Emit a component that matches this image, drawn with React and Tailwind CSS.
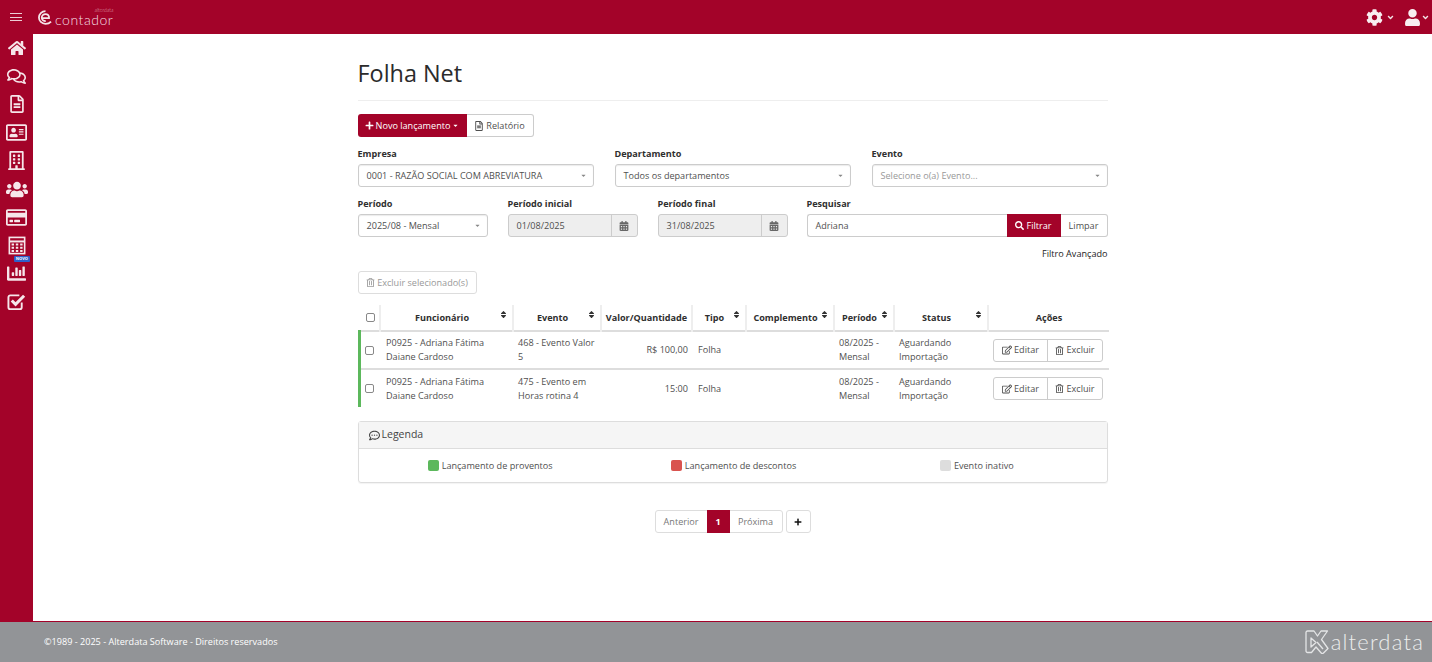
import React from "react";
import {
  FaHome, FaRegComments, FaRegFileAlt, FaRegAddressCard, FaRegBuilding, FaUsers, FaRegCreditCard,
  FaChartBar, FaCog, FaUser, FaAngleDown, FaSort, FaPlus, FaCaretDown,
  FaCalendarAlt, FaSearch, FaRegEdit, FaRegTrashAlt, FaRegCommentDots,
} from "react-icons/fa";

function Calculator({ className }) {
  return (
    <svg viewBox="0 0 20 20" className={className} fill="none" stroke="currentColor">
      <rect x="1.5" y="1" width="17" height="18" strokeWidth="1.8" />
      <path d="M2 5.5h16" strokeWidth="2.2" />
      <path d="M4 9h2.7M8.7 9h2.7M13.5 9h2.7M4 12.5h2.7M8.7 12.5h2.7M13.5 12.5h2.7M4 16h2.7M8.7 16h2.7M13.5 16h2.7" strokeWidth="2.2" />
    </svg>
  );
}

function CheckBoxIcon({ className }) {
  return (
    <svg viewBox="0 0 20 20" className={className} fill="none" stroke="currentColor">
      <path d="M15.5 11v5a2 2 0 0 1-2 2H3.5a2 2 0 0 1-2-2V5.5a2 2 0 0 1 2-2H13" strokeWidth="2" />
      <path d="M5 9l4 4 9-9" strokeWidth="3.2" />
    </svg>
  );
}

function SelectBox({ text, placeholder }) {
  return (
    <div className="flex h-[23px] items-center justify-between rounded-[3px] border border-[#ccc] bg-white pl-2 pr-[6px] shadow-[inset_0_1px_1px_rgba(0,0,0,0.08)]">
      <span className={placeholder ? "text-[#999]" : "text-[#4f4f4f]"}>{text}</span>
      <FaCaretDown className="h-[7px] w-[7px] text-[#888]" />
    </div>
  );
}

function Label({ children }) {
  return <div className="mb-[3px] h-[14px] text-[9.1px] font-bold leading-[13px] text-[#2f2f2f]">{children}</div>;
}

function DateField({ label, value }) {
  return (
    <div className="w-[130px]">
      <Label>{label}</Label>
      <div className="flex h-[23px] rounded-[3px] border border-[#ccc] bg-[#eee] text-[#4f4f4f]">
        <div className="flex flex-1 items-center pl-2">{value}</div>
        <div className="flex w-[26px] items-center justify-center border-l border-[#ccc]">
          <FaCalendarAlt className="h-[10px] w-[10px] text-[#666]" />
        </div>
      </div>
    </div>
  );
}

function Th({ children, sort }) {
  return (
    <th className={`relative border-l-2 border-[#eee] text-center text-[9.1px] font-bold text-[#2f2f2f] ${sort ? "pr-[9px]" : ""}`}>
      {children}
      {sort && <FaSort className="absolute right-[4px] top-[5px] h-[9px] w-[9px] text-[#333]" />}
    </th>
  );
}

function Row({ evento1, evento2, valor }) {
  return (
    <tr className="h-[38px] border-t-2 border-[#ddd]">
      <td className="border-l-[3px] border-[#5cb85c] pl-[4px]">
        <span className="block h-[9px] w-[9px] rounded-[2px] border border-[#888] bg-white" />
      </td>
      <td className="pl-[6px] leading-[14px]">P0925 - Adriana Fátima<br />Daiane Cardoso</td>
      <td className="pl-[5px] leading-[14px]">{evento1}<br />{evento2}</td>
      <td className="pr-[4px] text-right">{valor}</td>
      <td className="pl-[6px]">Folha</td>
      <td />
      <td className="pl-[5px] leading-[14px]">08/2025 -<br />Mensal</td>
      <td className="pl-[5px] leading-[14px]">Aguardando<br />Importação</td>
      <td className="pl-[5px]">
        <div className="flex h-[23px] w-[110px] rounded-[3px] border border-[#ccc] text-[#4f4f4f]">
          <div className="flex w-[54px] items-center justify-center gap-[2px] border-r border-[#ccc]">
            <FaRegEdit className="h-[10px] w-[10px]" />Editar
          </div>
          <div className="flex flex-1 items-center justify-center gap-[2px]">
            <FaRegTrashAlt className="h-[9px] w-[9px]" />Excluir
          </div>
        </div>
      </td>
    </tr>
  );
}

function Legend({ color, text, className = "" }) {
  return (
    <div className={`flex items-center justify-center gap-[3px] ${className}`}>
      <span className={`block h-[11px] w-[11px] rounded-[2px] ${color}`} />
      <span>{text}</span>
    </div>
  );
}

const sideIcons = [
  [FaHome, "h-[18px] w-[18px]"],
  [FaRegComments, "h-[19px] w-[19px]"],
  [FaRegFileAlt, "h-[18px] w-[18px]"],
  [FaRegAddressCard, "h-[19px] w-[21px]"],
  [FaRegBuilding, "h-[19px] w-[17px]"],
  [FaUsers, "h-[21px] w-[22px]"],
  [FaRegCreditCard, "h-[19px] w-[21px]"],
  [Calculator, "h-[19px] w-[18px]"],
  [FaChartBar, "h-[19px] w-[21px]"],
  [CheckBoxIcon, "h-[19px] w-[19px]"],
];

export default function App() {
  return (
    <div className="flex h-screen flex-col overflow-hidden bg-white font-['Open_Sans',sans-serif] text-[9.1px] text-[#4f4f4f]">
      <header className="flex h-[34px] shrink-0 items-center justify-between bg-[#a30329] pl-[10px] pr-[2px] text-[#f3e3e6]">
        <div className="flex items-center">
          <div className="flex w-[12px] flex-col gap-[2.5px]">
            <span className="block h-[1px] bg-[#eccdd4]" />
            <span className="block h-[1px] bg-[#eccdd4]" />
            <span className="block h-[1px] bg-[#eccdd4]" />
          </div>
          <svg viewBox="0 0 16 16" className="ml-[16px] h-[15px] w-[15px]" fill="none" stroke="#f6e6ea" strokeWidth="1.9">
            <path d="M4.6 8.6h7.2c.3-2.400-1.500-4.300-3.800-4.300S4 6 4 8s1.700 3.900 4.300 3.900M8 1.200C4 1.200 1 4.300 1 8s3 6.800 7 6.800c2.400 0 4.400-.8 5.900-2.400" />
          </svg>
          <div className="relative ml-[2px] mt-[4px] font-['Lato',sans-serif] text-[14px] font-light leading-[15px] tracking-[0.55px] text-[#f3dfe4]">
            contador
            <span className="absolute right-0 top-[-5px] text-[5px] leading-[6px] tracking-normal text-[#e0b0bc]">alterdata</span>
          </div>
        </div>
        <div className="flex items-center">
          <FaCog className="h-[17px] w-[17px] text-[#f8eef0]" />
          <FaAngleDown className="ml-[3px] h-[9px] w-[9px]" />
          <FaUser className="ml-[10px] h-[17px] w-[15px] text-[#f8eef0]" />
          <FaAngleDown className="ml-[1px] h-[9px] w-[9px]" />
        </div>
      </header>

      <div className="flex min-h-0 flex-1">
        <aside className="flex w-[33px] shrink-0 flex-col bg-[#a30329] text-[#f6e6ea]">
          {sideIcons.map(([Icon, cls], i) => (
            <div key={i} className="relative flex h-[28.2px] shrink-0 items-center justify-center">
              <Icon className={cls} />
              {i === 7 && (
                <span className="absolute bottom-[-2px] right-[3px] rounded-[1px] bg-[#2f5fc9] px-[2px] text-[4px] font-bold leading-[6px] text-white">NOVO</span>
              )}
            </div>
          ))}
        </aside>

        <main className="flex flex-1 justify-center">
          <div className="w-[750px]">
            <h1 className="mt-[22px] h-[34px] text-[23.4px] font-normal leading-[34px] text-[#2b2b2b]">Folha Net</h1>
            <div className="mt-[10px] h-[1px] bg-[#eee]" />

            <div className="mt-[13px] flex h-[23px]">
              <div className="flex w-[109px] items-center justify-center gap-[2px] rounded-l-[3px] bg-[#a30329] text-white">
                <FaPlus className="h-[9px] w-[9px]" />Novo lançamento
                <FaCaretDown className="h-[7px] w-[7px]" />
              </div>
              <div className="flex w-[67px] items-center justify-center gap-[2px] rounded-r-[3px] border border-[#ccc] border-l-0">
                <FaRegFileAlt className="h-[10px] w-[10px]" />Relatório
              </div>
            </div>

            <div className="mt-[10px] grid grid-cols-3 gap-x-[21px]">
              <div><Label>Empresa</Label><SelectBox text="0001 - RAZÃO SOCIAL COM ABREVIATURA" /></div>
              <div><Label>Departamento</Label><SelectBox text="Todos os departamentos" /></div>
              <div><Label>Evento</Label><SelectBox text="Selecione o(a) Evento..." placeholder /></div>
            </div>

            <div className="mt-[10px] flex gap-[20px]">
              <div className="w-[130px]"><Label>Período</Label><SelectBox text="2025/08 - Mensal" /></div>
              <DateField label="Período inicial" value="01/08/2025" />
              <DateField label="Período final" value="31/08/2025" />
              <div className="-ml-[1px] w-[301px]">
                <Label>Pesquisar</Label>
                <div className="flex h-[23px]">
                  <div className="flex flex-1 items-center rounded-l-[3px] border border-r-0 border-[#ccc] pl-2">Adriana</div>
                  <div className="flex w-[54px] items-center justify-center gap-[2px] bg-[#a30329] text-white">
                    <FaSearch className="h-[9px] w-[9px]" />Filtrar
                  </div>
                  <div className="flex w-[47px] items-center justify-center rounded-r-[3px] border border-l-0 border-[#ccc]">Limpar</div>
                </div>
              </div>
            </div>

            <div className="mt-[9px] h-[16px] text-right leading-[16px] text-[#222]">Filtro Avançado</div>

            <div className="mt-[9px] flex h-[23px] w-[119px] items-center justify-center gap-[2px] rounded-[3px] border border-[#ddd] text-[#999]">
              <FaRegTrashAlt className="h-[9px] w-[9px]" />Excluir selecionado(s)
            </div>

            <table className="mt-[11px] w-[750px] table-fixed border-collapse">
              <colgroup>
                <col className="w-[21px]" /><col className="w-[133px]" /><col className="w-[88px]" />
                <col className="w-[91px]" /><col className="w-[54px]" /><col className="w-[88px]" />
                <col className="w-[60px]" /><col className="w-[94px]" /><col className="w-[121px]" />
              </colgroup>
              <thead>
                <tr className="h-[26px]">
                  <th className="pl-[7px]"><span className="block h-[9px] w-[9px] rounded-[2px] border border-[#888] bg-white" /></th>
                  <Th sort>Funcionário</Th>
                  <Th sort>Evento</Th>
                  <Th>Valor/Quantidade</Th>
                  <Th sort>Tipo</Th>
                  <Th sort>Complemento</Th>
                  <Th sort>Período</Th>
                  <Th sort>Status</Th>
                  <Th>Ações</Th>
                </tr>
              </thead>
              <tbody>
                <Row evento1="468 - Evento Valor" evento2="5" valor="R$ 100,00" />
                <Row evento1="475 - Evento em" evento2="Horas rotina 4" valor="15:00" />
              </tbody>
            </table>

            <section className="mt-[14px] h-[62px] rounded-[3px] border border-[#ddd] shadow-[0_1px_1px_rgba(0,0,0,0.05)]">
              <div className="flex h-[27px] items-center gap-[2px] border-b border-[#ddd] bg-[#f5f5f5] pl-[10px] text-[10.5px] text-[#444]">
                <FaRegCommentDots className="h-[11px] w-[11px]" />Legenda
              </div>
              <div className="grid h-[33px] grid-cols-3 items-center">
                <Legend color="bg-[#5cb85c]" text="Lançamento de proventos" className="pl-[14px]" />
                <Legend color="bg-[#d9534f]" text="Lançamento de descontos" className="pl-[2px]" />
                <Legend color="bg-[#dddddd]" text="Evento inativo" className="pr-[10px]" />
              </div>
            </section>

            <div className="mt-[27px] flex h-[23px] justify-center gap-[3px]">
              <div className="flex rounded-[3px] border border-[#ddd] text-[#777]">
                <div className="flex w-[51px] items-center justify-center">Anterior</div>
                <div className="my-[-1px] flex w-[23px] items-center justify-center bg-[#a30329] font-bold text-white">1</div>
                <div className="flex w-[52px] items-center justify-center">Próxima</div>
              </div>
              <div className="flex w-[25px] items-center justify-center rounded-[3px] border border-[#ddd] text-[#111]">
                <FaPlus className="h-[8px] w-[8px]" />
              </div>
            </div>
          </div>
        </main>
      </div>

      <footer className="flex h-[41px] shrink-0 items-center justify-between border-t border-[#a30329] bg-[#929497] pl-[44px] pr-[8px] text-white">
        <span>©1989 - 2025 - Alterdata Software - Direitos reservados</span>
        <div className="flex items-center gap-[2px] text-[#eceded]">
          <svg viewBox="0 0 24 24" className="h-[24px] w-[24px]" fill="none" stroke="#e4e5e6" strokeWidth="1.3" strokeLinejoin="round">
            <path d="M1 2.500C1 1.700 1.700 1 2.500 1H9l3.500 5L16 1h6.500l-6 8.500 6.500 9-4.500 4.500c-.7.700-1.700.700-2.300 0L11 17l-4.500 5.500H2.500C1.700 22.500 1 21.800 1 21V2.500z" />
            <path d="M6 8l5 4.500L6 17V8z" />
            <path d="M12 12l6 7" />
          </svg>
          <span className="font-['Lato',sans-serif] text-[22px] font-light leading-[24px] tracking-[1.2px]">alterdata</span>
        </div>
      </footer>
    </div>
  );
}
